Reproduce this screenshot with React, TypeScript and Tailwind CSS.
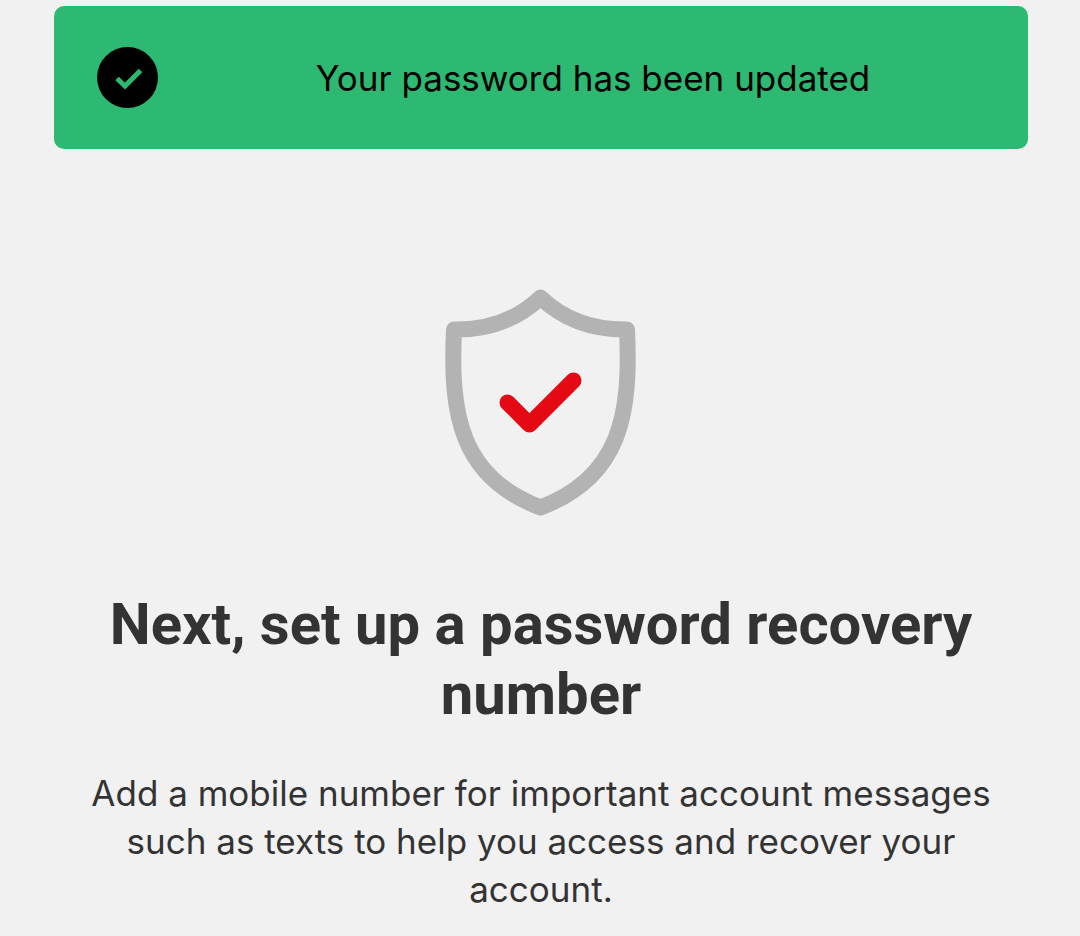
export default function App() {
  return (
    <div className="min-h-screen bg-[#f1f1f1] pt-1.5 font-['Inter',sans-serif] text-[#333333]">
      <div role="status" className="mr-[52px] ml-[54px] flex h-[143px] items-center rounded-[10px] bg-[#2db971] pl-[43px] text-black">
        <svg viewBox="0 0 61 61" className="size-[61px] shrink-0" aria-hidden="true">
          <circle cx="30.5" cy="30.5" r="30.5" fill="#000" />
          <path d="M20 31.500L28 39L43.500 23.500" fill="none" stroke="#2db971" strokeWidth="5" />
        </svg>
        <p className="flex-1 pt-0.5 text-center text-[35px]">Your password has been updated</p>
      </div>
      <main className="flex flex-col items-center pr-12 pl-[50px] text-center">
        <svg viewBox="0 0 192 228" className="mt-[139px] h-[228px] w-[192px]" aria-hidden="true">
          <path d="M95.500 9.500C73 31 45 42 9 41.500C5 126 15 189 95.500 219.500C176 189 186 126 182 41.500C146 42 118 31 95.500 9.500Z" fill="none" stroke="#b3b3b3" strokeWidth="16" strokeLinejoin="round" />
          <path d="M62.500 114.500L84.500 136.500L128.500 92.500" fill="none" stroke="#e50914" strokeWidth="16" strokeLinecap="round" strokeLinejoin="round" />
        </svg>
        <h1 className="mt-[73px] font-['Roboto',sans-serif] text-[58px] leading-[70px] font-bold">Next, set up a password recovery number</h1>
        <p className="mt-10 text-[35px] leading-[48px]">Add a mobile number for important account messages such as texts to help you access and recover your account.</p>
      </main>
    </div>
  );
}
